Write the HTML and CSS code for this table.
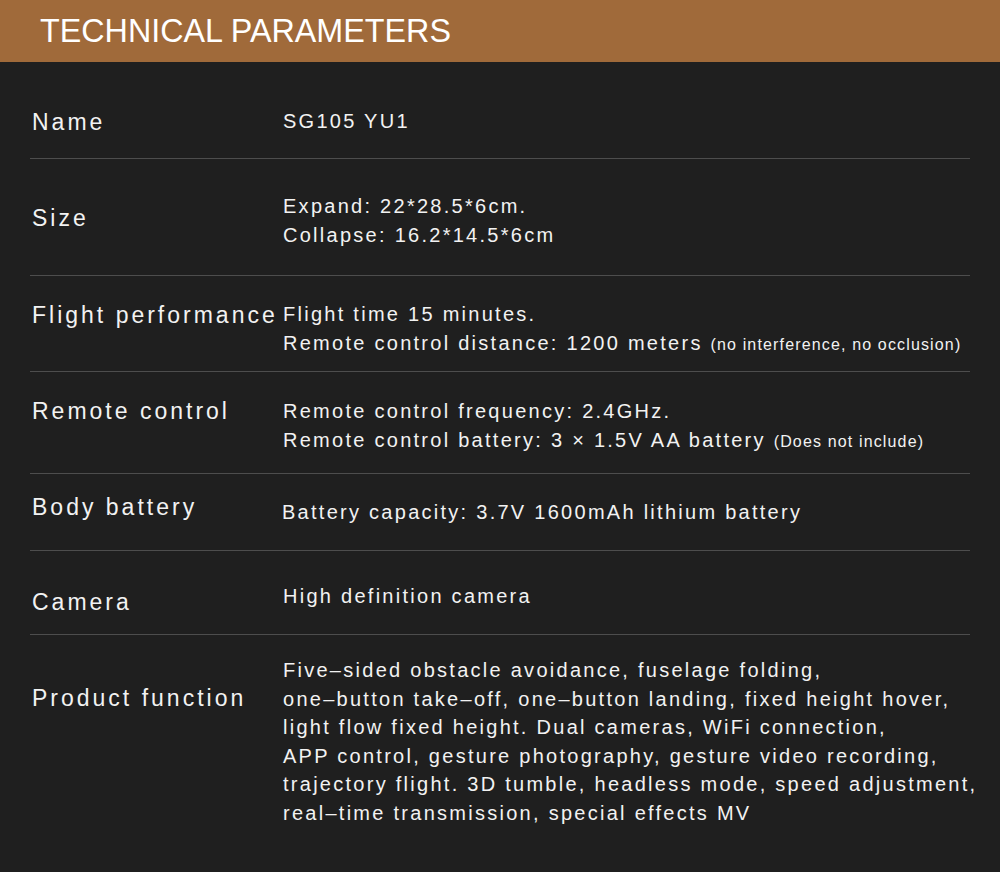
FILE: index.html
```html
<!DOCTYPE html>
<html lang="en">
<head>
<meta charset="utf-8">
<title>Technical Parameters</title>
<link rel="stylesheet" href="styles.css">
</head>
<body>
<div class="page">
  <header class="banner">
    <h1 class="banner-title">TECHNICAL PARAMETERS</h1>
  </header>
  <section class="spec-table">
    <div class="row row-name">
      <div class="label">Name</div>
      <div class="value">SG105 YU1</div>
    </div>
    <div class="row row-size">
      <div class="label">Size</div>
      <div class="value">Expand: 22*28.5*6cm.<br>Collapse: 16.2*14.5*6cm</div>
    </div>
    <div class="row row-flight">
      <div class="label">Flight performance</div>
      <div class="value">Flight time 15 minutes.<br>Remote control distance: 1200 meters <span class="note">(no interference, no occlusion)</span></div>
    </div>
    <div class="row row-remote">
      <div class="label">Remote control</div>
      <div class="value">Remote control frequency: 2.4GHz.<br>Remote control battery: 3 × 1.5V AA battery <span class="note">(Does not include)</span></div>
    </div>
    <div class="row row-battery">
      <div class="label">Body battery</div>
      <div class="value">Battery capacity: 3.7V 1600mAh lithium battery</div>
    </div>
    <div class="row row-camera">
      <div class="label">Camera</div>
      <div class="value">High definition camera</div>
    </div>
    <div class="row row-function">
      <div class="label">Product function</div>
      <div class="value">Five–sided obstacle avoidance, fuselage folding,<br>one–button take–off, one–button landing, fixed height hover,<br>light flow fixed height. Dual cameras, WiFi connection,<br>APP control, gesture photography, gesture video recording,<br>trajectory flight. 3D tumble, headless mode, speed adjustment,<br>real–time transmission, special effects MV</div>
    </div>
  </section>
</div>
</body>
</html>
```

FILE: styles.css
```css
* { box-sizing: border-box; }
html, body { margin: 0; padding: 0; }
body {
  background: #1f1f1f;
  color: #f2f2f2;
  font-family: "Liberation Sans", Arial, sans-serif;
}
.page { width: 1000px; height: 872px; overflow: hidden; }
.banner {
  height: 62px;
  background: #a06a3a;
  display: flex;
  align-items: center;
  padding-left: 40px;
}
.banner-title {
  margin: 0;
  font-size: 32.3px;
  font-weight: normal;
  color: #ffffff;
  line-height: 1;
  padding-top: 1px;
}
.spec-table { margin: 0 30px; }
.row {
  display: flex;
  border-bottom: 1px solid #4d4d4d;
}
.label {
  width: 253px;
  flex: none;
  padding-left: 2px;
  font-size: 23px;
  line-height: 30px;
  letter-spacing: 3px;
  white-space: nowrap;
}
.value {
  font-size: 20px;
  line-height: 29px;
  letter-spacing: 2.27px;
  white-space: nowrap;
}
.note { font-size: 16px; letter-spacing: 1.15px; }

.row-name { height: 97px; }
.row-name .label { padding-top: 45px; }
.row-name .value { padding-top: 45px; }

.row-size { height: 117px; }
.row-size .label { padding-top: 44px; }
.row-size .value { padding-top: 33px; }

.row-flight { height: 96px; }
.row-flight .label { padding-top: 24px; }
.row-flight .value { padding-top: 24px; }

.row-remote { height: 102px; }
.row-remote .label { padding-top: 24px; }
.row-remote .value { padding-top: 25px; }

.row-battery { height: 77px; }
.row-battery .label { padding-top: 18px; }
.row-battery .value { padding-top: 24px; margin-left: -1px; }

.row-camera { height: 84px; }
.row-camera .label { padding-top: 36px; }
.row-camera .value { padding-top: 31px; }

.row-function { border-bottom: none; }
.row-function .label { padding-top: 48px; }
.row-function .value { padding-top: 21px; line-height: 28.6px; }
```
